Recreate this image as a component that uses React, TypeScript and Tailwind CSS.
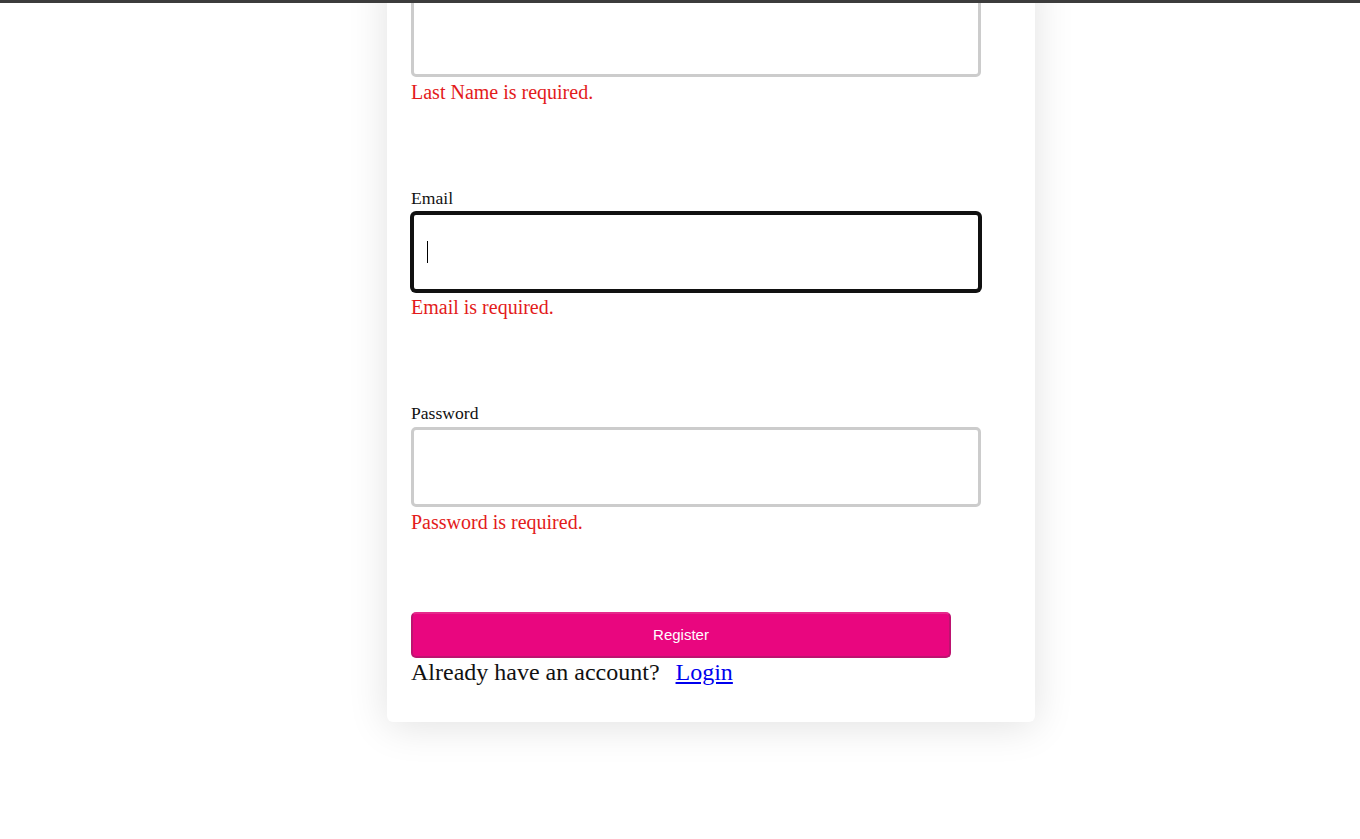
import { useState } from "react";

type Field = {
  name: string;
  label: string;
  type: string;
  error: string;
  hideLabel?: boolean;
};

// the page is scrolled: the card's top (heading, first name, last name label) sits above the viewport
const fields: Field[] = [
  { name: "lastName", label: "Last Name", type: "text", error: "Last Name is required.", hideLabel: true },
  { name: "email", label: "Email", type: "email", error: "Email is required." },
  { name: "password", label: "Password", type: "password", error: "Password is required." },
];

export default function App() {
  const [values, setValues] = useState<Record<string, string>>({});
  const focused = "email";

  return (
    <div className="min-h-screen bg-white font-['Liberation_Serif','Times_New_Roman',serif] text-[#111]">
      {/* top strip of the browser chrome */}
      <div className="fixed top-0 inset-x-0 h-[3px] bg-[#3c3c3c] z-10" />

      <div className="flex justify-center pl-[62px]">
        <form
          onSubmit={(e) => e.preventDefault()}
          className="w-[648px] -mt-[31px] bg-white rounded-md px-6 pt-6 pb-9 shadow-[0_4px_40px_rgba(0,0,0,0.12)]"
        >
          {fields.map((f) => (
            <div key={f.name} className="mb-[84px]">
              {!f.hideLabel && (
                <label htmlFor={f.name} className="block text-[17.6px] leading-[20px]">
                  {f.label}
                </label>
              )}
              <div className="relative mt-1 w-[95%]">
                <input
                  id={f.name}
                  type={f.type}
                  aria-label={f.label}
                  value={values[f.name] ?? ""}
                  onChange={(e) => setValues((v) => ({ ...v, [f.name]: e.target.value }))}
                  className={`block w-full h-[80px] rounded-[5px] border-[3px] bg-white px-3 outline-none ${
                    f.name === focused ? "border-[#111] ring-1 ring-[#111]" : "border-[#cccccc]"
                  }`}
                />
                {f.name === focused && (
                  <span className="absolute left-[16px] top-[29px] h-[22px] w-px bg-black" />
                )}
              </div>
              <div className="mt-[4px] text-[20px] leading-[23px] text-[#e31b1b]">{f.error}</div>
            </div>
          ))}

          <div className="-mt-[6px]">
            <button
              type="submit"
              className="block w-[90%] h-[46px] rounded-[5px] border-2 border-[#bd1370] border-t-[#e42a8c] bg-[#e9067f] text-white text-[15px] font-['Liberation_Sans',Arial,sans-serif]"
            >
              Register
            </button>
            <p className="text-[24px] leading-[28px]">
              Already have an account?{" "}
              <a href="#" className="ml-[10px] text-[#0000ee] underline">
                Login
              </a>
            </p>
          </div>
        </form>
      </div>
    </div>
  );
}
